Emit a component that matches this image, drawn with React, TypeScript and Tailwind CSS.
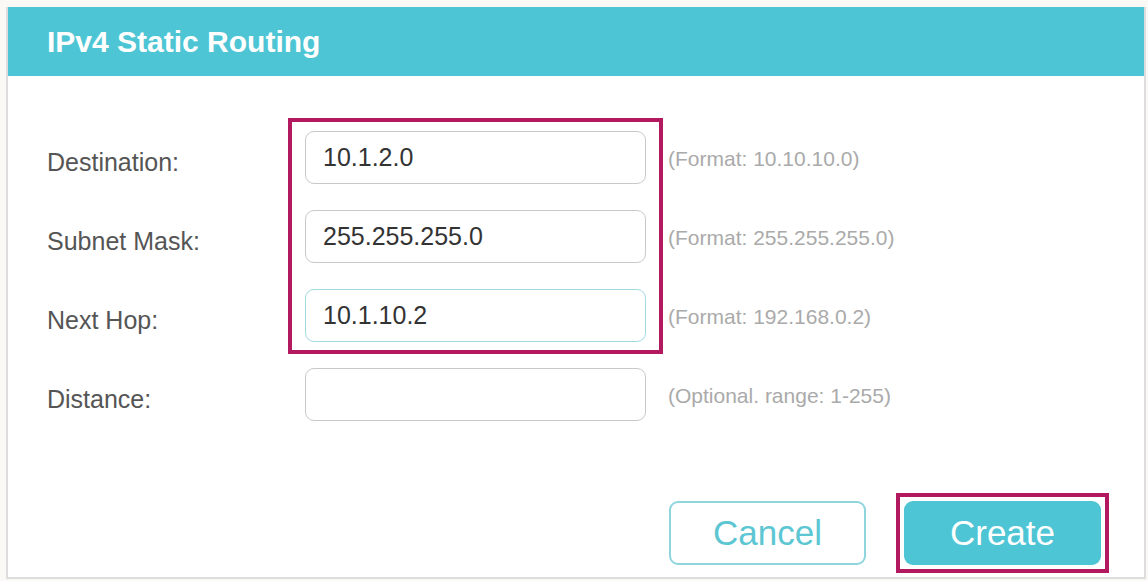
const rows = [
  { label: "Destination:", value: "10.1.2.0", hint: "(Format: 10.10.10.0)" },
  { label: "Subnet Mask:", value: "255.255.255.0", hint: "(Format: 255.255.255.0)" },
  { label: "Next Hop:", value: "10.1.10.2", hint: "(Format: 192.168.0.2)", focused: true },
  { label: "Distance:", value: "", hint: "(Optional. range: 1-255)" },
];

function Field({ value, focused }: { value: string; focused?: boolean }) {
  return (
    <div
      className={`flex h-[53px] w-[341px] items-center rounded-[9px] border bg-white pl-[17px] text-[25px] text-[#333] ${
        focused ? "border-[#9fdbe2]" : "border-[#c9c9c9]"
      }`}
    >
      {value}
    </div>
  );
}

export default function App() {
  const marked = rows.slice(0, 3);
  const rest = rows.slice(3);

  return (
    <div
      className="h-[581px] w-[1148px] bg-[#fbf9f6] pt-[7px] pr-[2px] pb-[2px] pl-[6px]"
      style={{ fontFamily: '"Liberation Sans", Arial, sans-serif' }}
    >
      <div className="flex h-full flex-col border-x-2 border-b-2 border-[#dddddd] bg-white">
        <div className="flex h-[69px] shrink-0 items-center bg-[#4ec5d4] pl-[39px] text-[30px] font-bold text-white">
          IPv4 Static Routing
        </div>

        <div className="flex pt-[55px] pl-[39px]">
          {/* labels */}
          <div className="flex w-[258px] flex-col gap-[26px]">
            {rows.map(row => (
              <div
                key={row.label}
                className="flex h-[53px] items-center pt-[10px] text-[25px] text-[#555]"
              >
                {row.label}
              </div>
            ))}
          </div>

          {/* inputs */}
          <div className="flex flex-col gap-[26px]">
            <div className="-mx-[17px] -mt-[13px] -mb-[12px] flex flex-col gap-[26px] border-4 border-[#b3195f] pt-[9px] pr-[11px] pb-[8px] pl-[13px]">
              {marked.map(row => (
                <Field key={row.label} value={row.value} focused={row.focused} />
              ))}
            </div>
            {rest.map(row => (
              <Field key={row.label} value={row.value} />
            ))}
          </div>

          {/* hints */}
          <div className="ml-[22px] flex flex-col gap-[26px]">
            {rows.map(row => (
              <div
                key={row.hint}
                className="flex h-[53px] items-center pt-[3px] text-[21px] text-[#aaaaaa]"
              >
                {row.hint}
              </div>
            ))}
          </div>
        </div>

        <div className="mt-[80px] flex justify-end gap-[38px] pr-[43px]">
          <button className="flex h-[64px] w-[197px] items-center justify-center rounded-[9px] border-2 border-[#8fd5de] bg-white text-[35px] text-[#5cc6d3]">
            Cancel
          </button>
          <div className="-m-[8px] border-4 border-[#b3195f] p-[4px]">
            <button className="flex h-[64px] w-[197px] items-center justify-center rounded-[9px] bg-[#4ec5d4] text-[35px] text-white">
              Create
            </button>
          </div>
        </div>
      </div>
    </div>
  );
}
